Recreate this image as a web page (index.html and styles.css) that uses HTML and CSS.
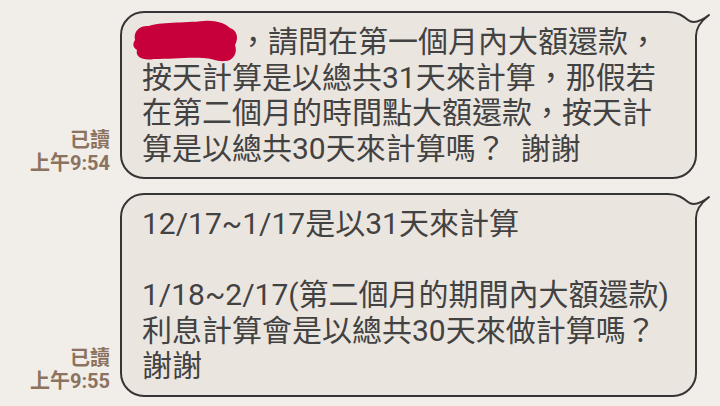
FILE: index.html
```html
<!DOCTYPE html>
<html lang="zh-Hant">
<head>
<meta charset="utf-8">
<title>Chat</title>
<link rel="stylesheet" href="styles.css">
</head>
<body>
<div class="chat">
  <div class="row">
    <div class="meta"><div>已讀</div><div>上午9:54</div></div>
    <div class="bubble">
      <svg class="tail" viewBox="655 8 57 37" width="57" height="37">
        <rect x="655" y="8" width="57" height="37" class="tail-bg"/>
        <path class="tail-fill" d="M655,12 L668,12 C678,12 683,16 688,20 C693,24 700,22 709,15 C701,21 696,27 696,36 L696,45 L655,45 Z"/>
        <path class="tail-line" d="M655,12 L668,12 C678,12 683,16 688,20 C693,24 700,22 709,15 C701,21 696,27 696,36 L696,45"/>
      </svg>
      <p class="msg"><span class="redact"><svg class="blob" viewBox="130 18 112 48" width="112" height="48"><path d="M136,40 C134,31 141,25 150,26 C160,22 185,23 205,21 C216,20 226,23 231,28 C238,30 240,38 236,45 C239,53 234,61 226,61 C219,62 212,58 204,58 C190,57 170,59 155,59 C144,61 136,57 138,50 C133,47 134,43 136,40 Z"/></svg></span>，請問在第一個月內大額還款，<br>按天計算是以總共31天來計算，那假若<br>在第二個月的時間點大額還款，按天計<br>算是以總共30天來計算嗎？&nbsp;&nbsp;謝謝</p>
    </div>
  </div>
  <div class="row">
    <div class="meta"><div>已讀</div><div>上午9:55</div></div>
    <div class="bubble">
      <svg class="tail" viewBox="655 8 57 37" width="57" height="37">
        <rect x="655" y="8" width="57" height="37" class="tail-bg"/>
        <path class="tail-fill" d="M655,12 L668,12 C678,12 683,16 688,20 C693,24 700,22 709,15 C701,21 696,27 696,36 L696,45 L655,45 Z"/>
        <path class="tail-line" d="M655,12 L668,12 C678,12 683,16 688,20 C693,24 700,22 709,15 C701,21 696,27 696,36 L696,45"/>
      </svg>
      <p class="msg">12/17~1/17是以31天來計算<br>&nbsp;<br>1/18~2/17(第二個月的期間內大額還款)<br>利息計算會是以總共30天來做計算嗎？<br>謝謝</p>
    </div>
  </div>
</div>
</body>
</html>
```

FILE: styles.css
```css
html, body {
  margin: 0;
  padding: 0;
  background: #f1ede8;
}
body {
  width: 720px;
  height: 406px;
  overflow: hidden;
  font-family: Roboto, "Noto Sans CJK TC", sans-serif;
}
.chat {
  display: flex;
  flex-direction: column;
  gap: 14px;
  padding: 11px 23px 0 0;
}
.row {
  display: flex;
  justify-content: flex-end;
  align-items: flex-end;
  gap: 10px;
}
.meta {
  text-align: right;
  color: #8b7360;
  font-size: 20px;
  font-weight: 700;
  line-height: 23px;
  margin-bottom: 4px;
}
.bubble {
  position: relative;
  box-sizing: border-box;
  width: 577px;
  background: #ebe5df;
  border: 2px solid #363434;
  border-radius: 24px;
  border-top-right-radius: 0;
  padding: 11px 10px 11px 20px;
}
.msg {
  margin: 0;
  font-size: 30px;
  line-height: 35.5px;
  color: #424242;
  white-space: nowrap;
}
.tail {
  position: absolute;
  left: 533px;
  top: -5px;
  overflow: visible;
}
.tail-bg { fill: #f1ede8; }
.tail-fill { fill: #ebe5df; }
.tail-line {
  fill: none;
  stroke: #363434;
  stroke-width: 2;
  stroke-linejoin: round;
}
.redact {
  position: relative;
  display: inline-block;
  width: 96px;
  height: 35.5px;
  vertical-align: top;
}
.blob {
  position: absolute;
  left: -13px;
  top: -6px;
}
.blob path { fill: #c8003a; }
```
